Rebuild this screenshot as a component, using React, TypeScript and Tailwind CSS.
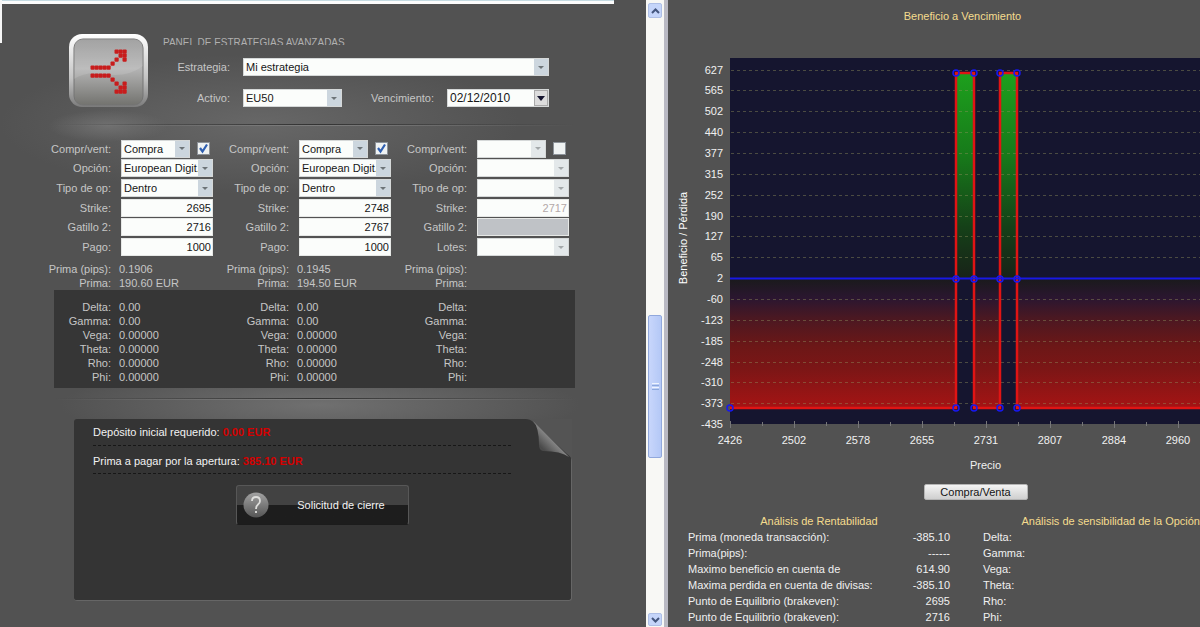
import React, { useId, useState } from 'react';

type Option = {
  side: string;
  kind: string;
  zone: string;
  strike: string;
  trigger: string;
  amountLabel: string;
  amount: string;
  pips: string;
  premium: string;
  enabled: boolean;
  greeks: string[];
};

const options: Option[] = [
  {
    side: 'Compra', kind: 'European Digit.', zone: 'Dentro', strike: '2695', trigger: '2716',
    amountLabel: 'Pago:', amount: '1000', pips: '0.1906', premium: '190.60 EUR', enabled: true,
    greeks: ['0.00', '0.00', '0.00000', '0.00000', '0.00000', '0.00000'],
  },
  {
    side: 'Compra', kind: 'European Digit.', zone: 'Dentro', strike: '2748', trigger: '2767',
    amountLabel: 'Pago:', amount: '1000', pips: '0.1945', premium: '194.50 EUR', enabled: true,
    greeks: ['0.00', '0.00', '0.00000', '0.00000', '0.00000', '0.00000'],
  },
  {
    side: '', kind: '', zone: '', strike: '2717', trigger: '',
    amountLabel: 'Lotes:', amount: '', pips: '', premium: '', enabled: false,
    greeks: ['', '', '', '', '', ''],
  },
];

const greekNames = ['Delta:', 'Gamma:', 'Vega:', 'Theta:', 'Rho:', 'Phi:'];

const results = [
  ['Prima (moneda transacción):', '-385.10'],
  ['Prima(pips):', '------'],
  ['Maximo beneficio en cuenta de', '614.90'],
  ['Maxima perdida en cuenta de divisas:', '-385.10'],
  ['Punto de Equilibrio (brakeven):', '2695'],
  ['Punto de Equilibrio (brakeven):', '2716'],
];

function Select({ id, value, disabled, className, strong }: {
  id: string; value: string; disabled?: boolean; className: string; strong?: boolean;
}) {
  return (
    <span className={`relative flex h-[18px] border border-[#d5d8d8] bg-[#fbfdfb] ${className}`}>
      <select
        id={id}
        disabled={disabled}
        defaultValue={value}
        className={`h-full w-full appearance-none overflow-hidden text-clip whitespace-nowrap bg-transparent pl-[2px] pr-[14px] text-[#161616] opacity-100 outline-none ${strong ? 'text-[12px]' : ''}`}
      >
        <option>{value}</option>
      </select>
      <span
        className={`pointer-events-none absolute inset-y-0 right-0 flex w-[14px] items-center justify-center ${
          strong ? 'border border-[#a9a9a9] bg-[#dcdcdc]' : disabled ? 'bg-[#e3e8ea]' : 'bg-[#ccd6de]'
        }`}
      >
        <svg className={strong ? 'h-[5px] w-[8px]' : 'h-[3px] w-[6px]'} viewBox="0 0 8 4" preserveAspectRatio="none" aria-hidden="true">
          <path d="M0 0h8L4 4z" fill={strong ? '#15152e' : disabled ? '#a3a8aa' : '#6d7478'} />
        </svg>
      </span>
    </span>
  );
}

function NumberBox({ id, value, disabled, blank }: { id: string; value: string; disabled?: boolean; blank?: boolean }) {
  return (
    <input
      id={id}
      disabled={disabled}
      defaultValue={value}
      className={`h-[18px] w-[92px] border border-[#e6e8e6] pr-[1px] text-right outline-none ${
        blank ? 'bg-[#bfc2c6]' : 'bg-[#fbfdfb]'
      } ${disabled ? 'text-[#b3a9a9]' : 'text-[#161616]'}`}
    />
  );
}

function Field({ id, label, children }: { id: string; label: string; children: React.ReactNode }) {
  return (
    <div className="flex items-center gap-[10px]">
      <label htmlFor={id} className="flex w-[61px] shrink-0 justify-end">{label}</label>
      {children}
    </div>
  );
}

function OptionColumn({ option }: { option: Option }) {
  const id = useId();
  const [on, setOn] = useState(option.enabled);
  const off = !option.enabled;
  return (
    <div className="w-[163px]">
      <div className="grid h-[118px] grid-rows-6">
        <Field id={id + 'a'} label="Compr/vent:">
          <span className="flex items-center gap-[7px]">
            <Select id={id + 'a'} value={option.side} disabled={off} className="w-[69px]" />
            <span className="relative flex h-[13px] w-[13px]">
              <input
                type="checkbox"
                aria-label="Activar opción"
                checked={on}
                onChange={() => setOn(!on)}
                className="h-full w-full appearance-none border border-[#8c9299] bg-[#eff2f2]"
              />
              {on && (
                <svg className="pointer-events-none absolute inset-0" viewBox="0 0 13 13" aria-hidden="true">
                  <path d="M3 6l2.5 3.5L10 2.500" fill="none" stroke="#2f5fb0" strokeWidth="2.200" />
                </svg>
              )}
            </span>
          </span>
        </Field>
        <Field id={id + 'b'} label="Opción:">
          <Select id={id + 'b'} value={option.kind} disabled={off} className="w-[92px]" />
        </Field>
        <Field id={id + 'c'} label="Tipo de op:">
          <Select id={id + 'c'} value={option.zone} disabled={off} className="w-[92px]" />
        </Field>
        <Field id={id + 'd'} label="Strike:">
          <NumberBox id={id + 'd'} value={option.strike} disabled={off} />
        </Field>
        <Field id={id + 'e'} label="Gatillo 2:">
          <NumberBox id={id + 'e'} value={option.trigger} disabled={off} blank={off} />
        </Field>
        <Field id={id + 'f'} label={option.amountLabel}>
          {off ? (
            <Select id={id + 'f'} value="" disabled className="w-[92px]" />
          ) : (
            <NumberBox id={id + 'f'} value={option.amount} />
          )}
        </Field>
      </div>
      <dl className="mt-[5px] grid grid-cols-[61px_1fr] gap-x-2 leading-[14px]">
        <dt className="flex justify-end whitespace-nowrap">Prima (pips):</dt>
        <dd>{option.pips}</dd>
        <dt className="text-right">Prima:</dt>
        <dd>{option.premium}</dd>
      </dl>
    </div>
  );
}

function StrategyIcon() {
  const upper = [[0, 4], [1, 4], [2, 4], [3, 4], [4, 4], [5, 3], [6, 2], [7, 1], [8, 0], [7, 0], [6, 0], [8, 1], [8, 2]];
  const dots = upper.flatMap(([x, y]) => [[x, y], [x, 10 - y]]);
  return (
    <svg className="mt-[27px] h-[84px] w-[84px] shrink-0" viewBox="0 0 84 84" aria-hidden="true">
      <defs>
        <linearGradient id="frame" x2="0" y2="1">
          <stop offset="0" stopColor="#fff" />
          <stop offset=".6" stopColor="#c4c4c4" />
          <stop offset="1" stopColor="#7b7b7b" />
        </linearGradient>
        <linearGradient id="face" x2="0" y2="1">
          <stop offset="0" stopColor="#969696" />
          <stop offset=".45" stopColor="#b4b4b4" />
          <stop offset="1" stopColor="#73736f" />
        </linearGradient>
      </defs>
      <rect x="3" y="3" width="79" height="73" rx="13" fill="url(#frame)" />
      <rect x="8" y="8" width="69" height="66" rx="9" fill="url(#face)" stroke="#747474" />
      <path d="M8 48V17q0-9 9-9h51q9 0 9 9v18q-16 12-39 8-18-3-30 5z" fill="#fff" opacity=".12" />
      {dots.map(([x, y], i) => (
        <rect key={i} x={24.500 + x * 4} y={18.500 + y * 4} width="4.200" height="4.200" rx="1" fill="#c81c1c" />
      ))}
    </svg>
  );
}

function Divider() {
  return (
    <div>
      <div className="h-px bg-linear-to-r from-transparent via-[#333333] to-transparent" />
      <div className="h-px bg-linear-to-r from-transparent via-[#7c7c7c] to-transparent" />
    </div>
  );
}

function Scrollbar() {
  return (
    <div className="flex w-[18px] shrink-0 flex-col bg-[#f8f8f5] px-[2px] pb-[1px] pt-[3px]">
      <button aria-label="Subir" className="flex h-[15px] items-center justify-center rounded-[2px] border border-[#aebfe6] bg-[#c5d5fa]">
        <svg className="h-[6px] w-[9px]" viewBox="0 0 9 6" aria-hidden="true"><path d="M1 5l3.500-3.500L8 5" fill="none" stroke="#44567e" strokeWidth="2" /></svg>
      </button>
      <div className="flex-[298]" />
      <div className="flex flex-[142] flex-col items-center justify-center gap-px rounded-[2px] border border-[#91a8dc] bg-linear-to-r from-[#c8d6fb] to-[#b4c8f6]">
        <i className="h-px w-[7px] bg-[#eef4fe]" />
        <i className="h-px w-[7px] bg-[#8ca8dc]" />
        <i className="h-px w-[7px] bg-[#eef4fe]" />
        <i className="h-px w-[7px] bg-[#8ca8dc]" />
      </div>
      <div className="flex-[156]" />
      <button aria-label="Bajar" className="flex h-[13px] items-center justify-center rounded-[2px] border border-[#aebfe6] bg-[#c5d5fa]">
        <svg className="h-[6px] w-[9px]" viewBox="0 0 9 6" aria-hidden="true"><path d="M1 1l3.500 3.500L8 1" fill="none" stroke="#44567e" strokeWidth="2" /></svg>
      </button>
    </div>
  );
}

function Chart() {
  const yLabels = [627, 565, 502, 440, 377, 315, 252, 190, 127, 65, 2, -60, -123, -185, -248, -310, -373, -435];
  const xLabels = [2426, 2502, 2578, 2655, 2731, 2807, 2884, 2960];
  const losses = [[62, 226], [306, 26], [349, 183]];
  const gains = [[288, 18], [332, 17]];
  const nodes = [[62, 368], [288, 33], [306, 33], [332, 33], [349, 33], [288, 239], [306, 239], [332, 239], [349, 239], [288, 368], [306, 368], [332, 368], [349, 368]];
  return (
    <svg className="w-full" viewBox="0 0 532 436" fontSize="11" fill="#f0f0f0" role="img" aria-label="Beneficio a Vencimiento">
      <defs>
        <linearGradient id="loss" x2="0" y2="1">
          <stop offset="0" stopColor="#1a1a1c" />
          <stop offset=".15" stopColor="#2b1630" />
          <stop offset=".3" stopColor="#4a1822" />
          <stop offset=".52" stopColor="#6c1717" />
          <stop offset=".7" stopColor="#7c1616" />
          <stop offset="1" stopColor="#a51414" />
        </linearGradient>
        <linearGradient id="gain" x2="0" y2="1">
          <stop offset="0" stopColor="#1da01d" />
          <stop offset=".4" stopColor="#177a1a" />
          <stop offset=".75" stopColor="#154018" />
          <stop offset="1" stopColor="#182218" />
        </linearGradient>
      </defs>
      <rect x="62" y="18" width="470" height="366" fill="#15152f" />
      {losses.map(([x, w]) => <rect key={x} x={x} y="239" width={w} height="129" fill="url(#loss)" />)}
      {gains.map(([x, w]) => <rect key={x} x={x} y="33" width={w} height="206" fill="url(#gain)" />)}
      {yLabels.map((v, i) => {
        const y = Math.round(29.5 + i * 20.86);
        return (
          <g key={v}>
            {i < 17 && <line x1="63" x2="532" y1={y + 0.5} y2={y + 0.5} stroke="#8d8d5c" strokeOpacity=".45" strokeDasharray="3 3" />}
            <text x="55" y={y + 4} textAnchor="end">{v}</text>
          </g>
        );
      })}
      {Array.from({ length: 15 }, (_, i) => (
        <line key={i} x1={62.5 + i * 32} x2={62.5 + i * 32} y1={i % 2 ? 382 : 381} y2={i % 2 ? 386 : 388} stroke="#77777a" />
      ))}
      {xLabels.map((v, i) => <text key={v} x={62 + i * 64} y="404" textAnchor="middle">{v}</text>)}
      <path d="M62 368H288V33H306V368H332V33H349V368H532" fill="none" stroke="#e01414" strokeWidth="2.500" />
      <line x1="62" x2="532" y1="238.500" y2="238.500" stroke="#1818e6" strokeWidth="2" />
      {nodes.map(([x, y], i) => <circle key={i} cx={x} cy={y} r="3" fill="none" stroke="#1818f0" strokeWidth="1.500" />)}
      <text x="317.500" y="429" textAnchor="middle">Precio</text>
      <text transform="translate(19 198) rotate(-90)" textAnchor="middle" fill="#ffffff">Beneficio / Pérdida</text>
    </svg>
  );
}

export default function App() {
  return (
    <div className="flex h-screen w-full overflow-hidden bg-[#525252] font-['Liberation_Sans',Arial,sans-serif] text-[11px] leading-[14px] text-[#f0f0f0]">
      <main className="relative min-w-0 flex-[646_1_0%] overflow-hidden bg-[#525252] bg-[radial-gradient(ellipse_60px_16px_at_108px_126px,#707070,transparent),radial-gradient(ellipse_260px_70px_at_260px_124px,#676767,transparent),radial-gradient(ellipse_260px_40px_at_320px_405px,#707070,transparent)] text-[#c6c6c6]">
        <div className="absolute left-0 top-0 h-[43px] w-[2px] bg-[#f6f6f6]" />
        <div className="mr-8 h-[4px] border-t border-[#c5dbe2] bg-[#fcfcfc]" />

        <header className="flex h-[120px] gap-[13px] pl-[66px]">
          <StrategyIcon />
          <div className="pt-[33px]">
            <h1 className="h-[8px] overflow-hidden whitespace-nowrap text-[10px] leading-[12px] text-[#b0b0b0]">PANEL DE ESTRATEGIAS AVANZADAS</h1>
            <div className="mt-[13px] flex items-center gap-[13px]">
              <label htmlFor="strategy" className="w-[67px] text-right">Estrategia:</label>
              <Select id="strategy" value="Mi estrategia" className="w-[306px]" />
            </div>
            <div className="mt-[13px] flex items-center gap-[13px]">
              <label htmlFor="asset" className="w-[67px] text-right">Activo:</label>
              <Select id="asset" value="EU50" className="w-[99px]" />
              <label htmlFor="expiry" className="ml-[5px] w-[74px] text-right">Vencimiento:</label>
              <Select id="expiry" value="02/12/2010" strong className="w-[102px]" />
            </div>
          </div>
        </header>

        <div className="ml-[54px] mr-[71px]"><Divider /></div>

        <section className="mt-[13px] flex gap-[15px] pl-[50px]">
          {options.map((o, i) => <OptionColumn key={i} option={o} />)}
        </section>

        <section className="ml-[54px] mr-[71px] flex gap-[15px] bg-[#363636] pb-1 pt-[10px]">
          {options.map((o, i) => (
            <dl key={i} className="grid w-[163px] grid-cols-[57px_1fr] gap-x-2">
              {greekNames.map((name, g) => (
                <React.Fragment key={name}>
                  <dt className="text-right">{name}</dt>
                  <dd>{o.greeks[g]}</dd>
                </React.Fragment>
              ))}
            </dl>
          ))}
        </section>

        <div className="ml-[54px] mr-[71px] mt-[10px]"><Divider /></div>

        <section className="relative ml-[74px] mr-[74px] mt-[19px] h-[182px] rounded-[3px] border-b border-r border-[#666666] bg-[#343434] pl-[19px] pt-[6px] text-[#f2f2f2]">
          <svg className="absolute -right-px top-0 h-[43px] w-[47px]" viewBox="0 0 47 43" aria-hidden="true">
            <defs>
              <linearGradient id="fold" x1="0" y1="1" x2="1" y2="0">
                <stop offset=".25" stopColor="#4a4a4a" />
                <stop offset=".5" stopColor="#858585" />
                <stop offset=".6" stopColor="#606060" />
              </linearGradient>
            </defs>
            <path d="M0 0h47v43q0-5-5-8L9 4Q6 0 0 0z" fill="#545454" />
            <path d="M8 2q6 6 6 24 0 5 4 6 18 0 26 6z" fill="url(#fold)" />
          </svg>
          <div className="mr-[60px] h-[21px] border-b border-dashed border-[#171717]">
            Depósito inicial requerido: <b className="text-[#d40000]">0.00 EUR</b>
          </div>
          <div className="mr-[60px] mt-[8px] h-[20px] border-b border-dashed border-[#171717]">
            Prima a pagar por la apertura: <b className="text-[#d40000]">385.10 EUR</b>
          </div>
          <button className="ml-[143px] mt-[11px] flex h-[40px] w-[173px] items-center rounded-[3px] border border-[#575757] border-b-[#1c1c1c] bg-linear-to-b from-[#424242] from-50% to-[#1d1d1d] to-50% pl-[6px]">
            <svg className="h-[26px] w-[26px]" viewBox="0 0 26 26" aria-hidden="true">
              <defs>
                <linearGradient id="ball" x2="0" y2="1">
                  <stop offset="0" stopColor="#a2a2a2" />
                  <stop offset="1" stopColor="#555555" />
                </linearGradient>
              </defs>
              <circle cx="13" cy="13" r="12.500" fill="url(#ball)" />
              <path d="M9 9q0-4 4-4t4 4q0 2-2 3.500t-2 4.500M13 19v2" fill="none" stroke="#dededc" strokeWidth="1.800" />
            </svg>
            <span className="flex-1 pl-[5px]">Solicitud de cierre</span>
          </button>
        </section>
      </main>

      <Scrollbar />
      <div className="w-[4px] shrink-0 bg-[#b9b9c3]" />

      <aside className="min-w-0 flex-[532_1_0%] overflow-hidden">
        <h2 className="pl-[57px] pt-[9px] text-center leading-[14px] text-[#f5dc8e]">Beneficio a Vencimiento</h2>
        <div className="mt-[17px]"><Chart /></div>
        <div className="mt-2 flex justify-center pl-[83px]">
          <button className="h-[16px] w-[104px] rounded-[2px] border border-[#b5b5b5] bg-linear-to-b from-[#f4f4f4] to-[#cfcfcf] leading-[14px] text-[#141414]">Compra/Venta</button>
        </div>
        <div className="mt-[13px] flex gap-[33px] pl-[20px] leading-[16px]">
          <table className="w-[262px] shrink-0">
            <caption className="text-[#f5dc8e]">Análisis de Rentabilidad</caption>
            <tbody>
              {results.map(([name, value], i) => (
                <tr key={i}>
                  <th scope="row" className="whitespace-nowrap text-left font-normal">{name}</th>
                  <td className="text-right">{value}</td>
                </tr>
              ))}
            </tbody>
          </table>
          <table className="grow">
            <caption className="whitespace-nowrap text-right text-[#f5dc8e]">Análisis de sensibilidad de la Opción</caption>
            <tbody>
              {greekNames.map((name) => (
                <tr key={name}>
                  <th scope="row" className="text-left font-normal">{name}</th>
                  <td />
                </tr>
              ))}
            </tbody>
          </table>
        </div>
      </aside>
    </div>
  );
}
